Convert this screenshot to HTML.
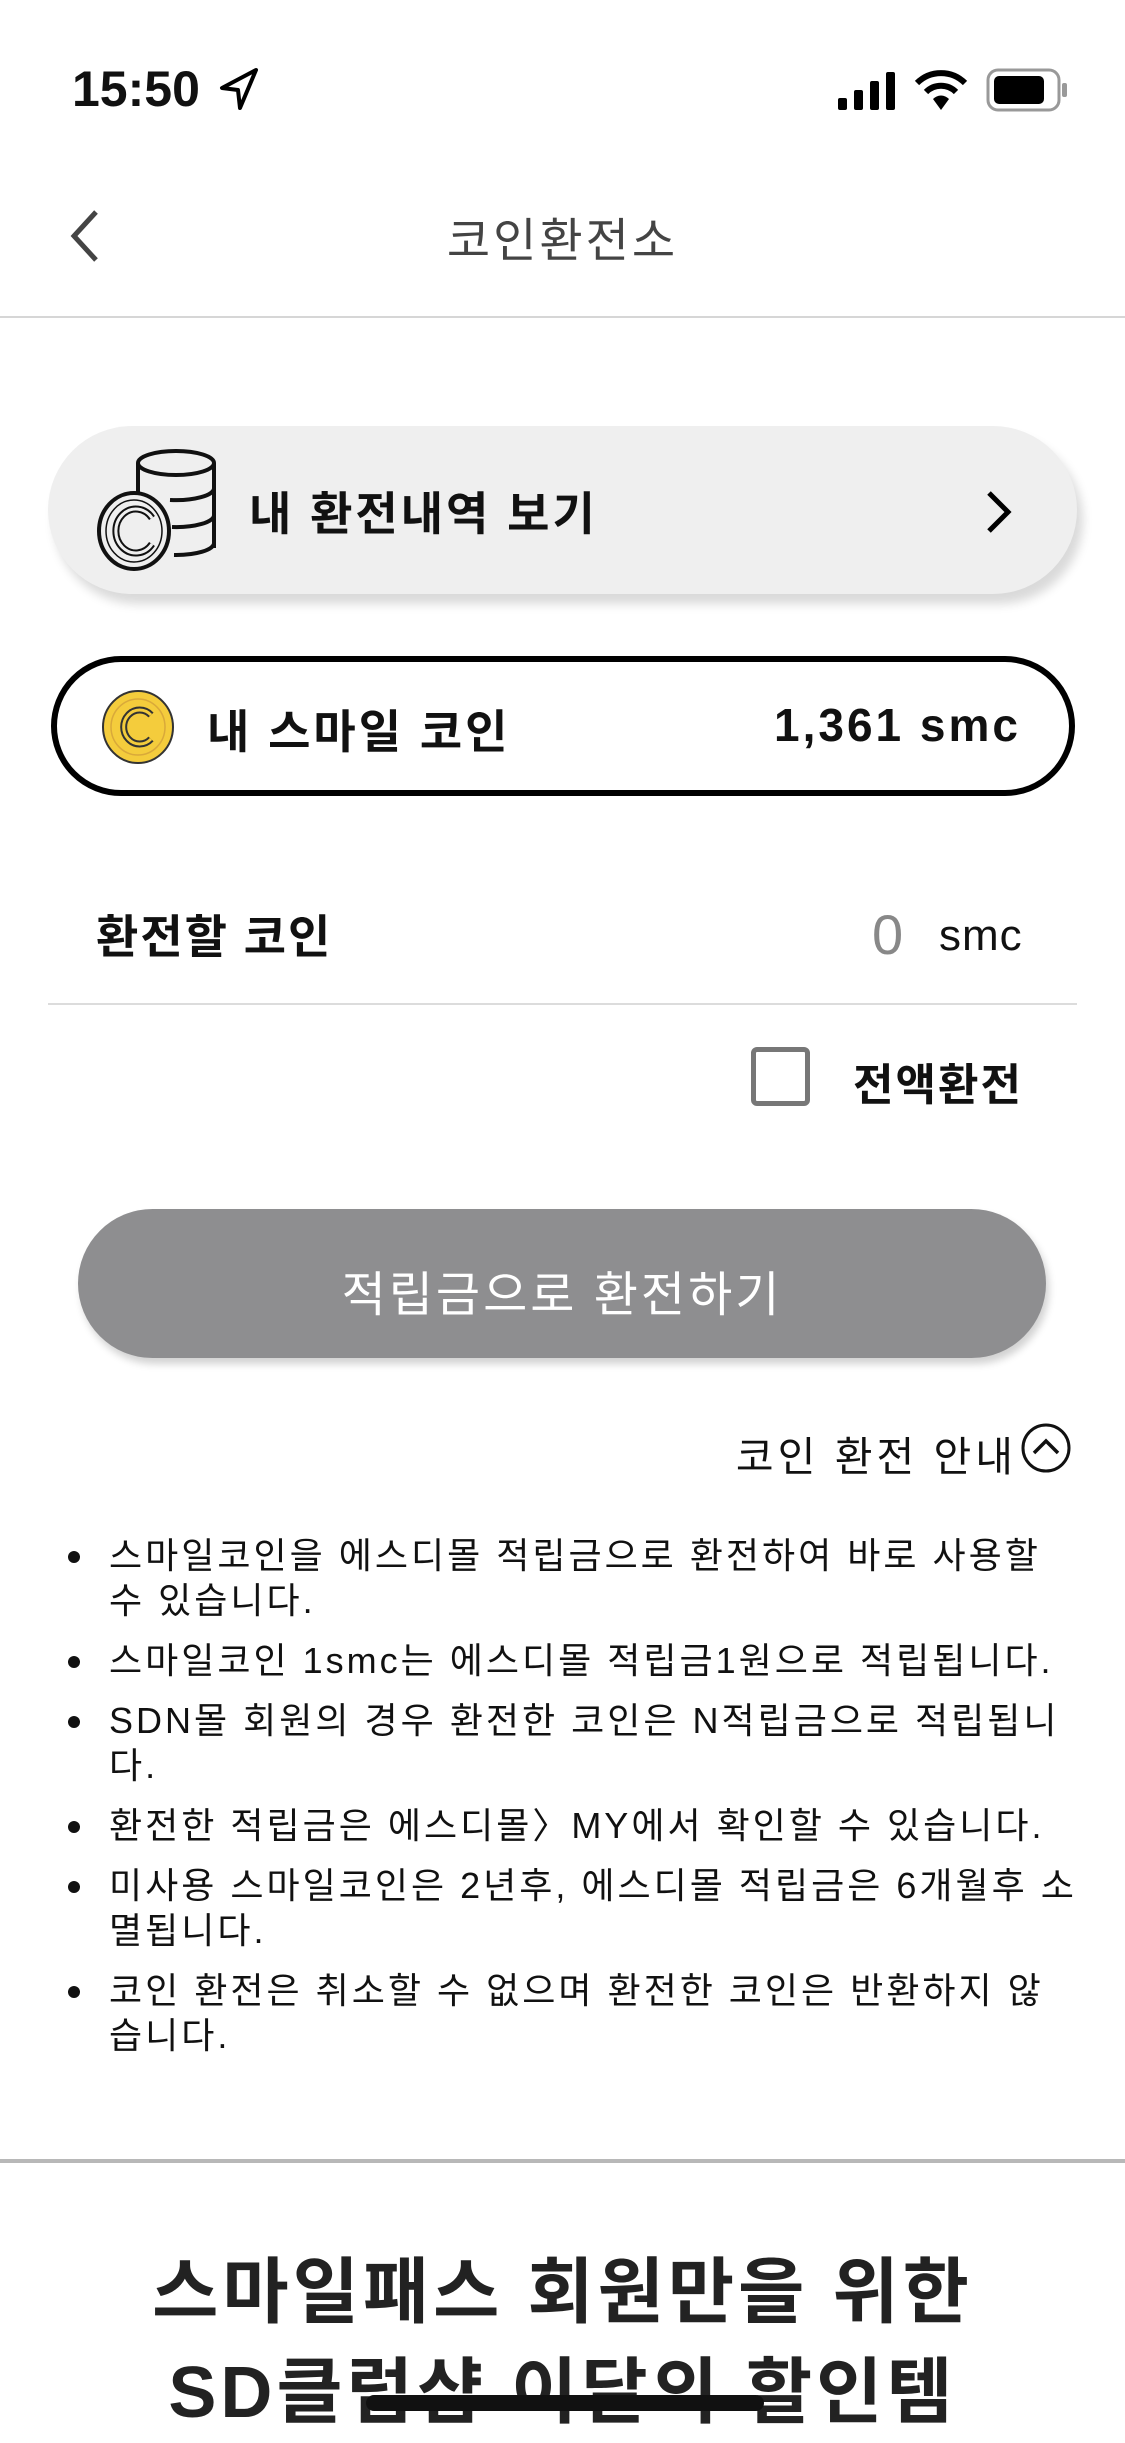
<!DOCTYPE html>
<html><head><meta charset="utf-8"><style>
*{margin:0;padding:0;box-sizing:border-box}
body{width:1125px;height:2436px;background:#fff;position:relative;overflow:hidden;font-family:"Liberation Sans","Noto Sans CJK KR",sans-serif;color:#111}
.a{position:absolute;white-space:nowrap}
ul{position:absolute;left:68px;top:1533px;width:1010px;list-style:none}
li{position:relative;padding-left:41px;font-size:36px;letter-spacing:3px;line-height:45px;margin-bottom:15px;color:#111}
li:before{content:"";position:absolute;left:0;top:18px;width:12px;height:12px;border-radius:50%;background:#111}
</style></head><body>
<div class="a" style="left:72px;top:60px;font-size:50px;font-weight:bold;letter-spacing:0px">15:50</div>
<svg class="a" style="left:218px;top:66px" width="42" height="46" viewBox="0 0 42 46"><path d="M38 4 L4 22 L20 24 L22 42 Z" fill="none" stroke="#000" stroke-width="4" stroke-linejoin="round"/></svg>
<svg class="a" style="left:838px;top:70px" width="62" height="40"><rect x="0" y="28" width="9" height="12" rx="2"/><rect x="16" y="20" width="9" height="20" rx="2"/><rect x="32" y="11" width="9" height="29" rx="2"/><rect x="48" y="2" width="9" height="38" rx="2"/></svg>
<svg class="a" style="left:914px;top:68px" width="54" height="44" viewBox="0 0 54 44"><path d="M3 15 A34 34 0 0 1 51 15" fill="none" stroke="#000" stroke-width="6"/><path d="M12 24 A21 21 0 0 1 42 24" fill="none" stroke="#000" stroke-width="6"/><path d="M19 31 L27 42 L35 31 A11 11 0 0 0 19 31Z"/></svg>
<svg class="a" style="left:986px;top:68px" width="84" height="44"><rect x="2" y="2" width="71" height="40" rx="10" fill="none" stroke="#999" stroke-width="3"/><rect x="8" y="8" width="50" height="28" rx="5"/><rect x="76" y="15" width="5" height="14" rx="2" fill="#999"/></svg>
<svg class="a" style="left:66px;top:208px" width="36" height="56"><path d="M30 4 L8 28 L30 52" fill="none" stroke="#444" stroke-width="5"/></svg>
<div class="a" style="left:0;width:1125px;text-align:center;top:202px;font-size:47px;letter-spacing:3px;color:#444">코인환전소</div>
<div class="a" style="left:0;top:316px;width:1125px;height:2px;background:#d6d6d6"></div>

<div class="a" style="left:48px;top:426px;width:1029px;height:168px;border-radius:84px;background:#efefef;box-shadow:6px 10px 10px rgba(0,0,0,0.15)"></div>
<svg class="a" style="left:94px;top:448px" width="126" height="126" viewBox="0 0 126 126"><g fill="none" stroke="#111" stroke-width="4"><ellipse cx="82" cy="15" rx="38" ry="12" fill="#efefef"/><path d="M44 15 V48 M120 15 V100 M120 40 A38 12 0 0 1 76 52 M120 67 A38 12 0 0 1 78 79 M120 95 A38 12 0 0 1 80 107"/><ellipse cx="40" cy="83" rx="35" ry="38" fill="#efefef"/><ellipse cx="40" cy="83" rx="28" ry="31" stroke-width="1.5"/><path d="M58 70 A20 22 0 1 0 58 96" stroke-width="7"/><path d="M58 70 A20 22 0 1 0 58 96" stroke="#efefef" stroke-width="3"/></g></svg>
<div class="a" style="left:249px;top:478px;font-size:46px;font-weight:bold;letter-spacing:3px">내 환전내역 보기</div>
<svg class="a" style="left:984px;top:490px" width="30" height="44"><path d="M5 3 L24 22 L5 41" fill="none" stroke="#000" stroke-width="5"/></svg>

<div class="a" style="left:51px;top:656px;width:1024px;height:140px;border-radius:70px;border:6px solid #000"></div>
<svg class="a" style="left:101px;top:689px" width="74" height="76"><ellipse cx="37" cy="38" rx="35" ry="36" fill="#f4cc3c" stroke="#333" stroke-width="2"/><ellipse cx="37" cy="38" rx="27" ry="28" fill="none" stroke="#d9a93a" stroke-width="1.5"/><path d="M50 26 A16 17 0 1 0 50 50" fill="none" stroke="#333" stroke-width="7"/><path d="M50 26 A16 17 0 1 0 50 50" fill="none" stroke="#f4cc3c" stroke-width="3"/></svg>
<div class="a" style="left:207px;top:696px;font-size:46px;font-weight:bold;letter-spacing:3px">내 스마일 코인</div>
<div class="a" style="right:104px;top:698px;font-size:46px;font-weight:bold;letter-spacing:3px">1,361 smc</div>

<div class="a" style="left:96px;top:901px;font-size:46px;font-weight:bold;letter-spacing:2px">환전할 코인</div>
<div class="a" style="left:872px;top:902px;font-size:56px;color:#888">0</div>
<div class="a" style="left:939px;top:911px;font-size:44px;letter-spacing:1px">smc</div>
<div class="a" style="left:48px;top:1003px;width:1029px;height:2px;background:#dcdcdc"></div>
<div class="a" style="left:751px;top:1047px;width:59px;height:59px;border:5px solid #777;border-radius:6px"></div>
<div class="a" style="left:853px;top:1049px;font-size:44px;font-weight:bold;letter-spacing:2px">전액환전</div>

<div class="a" style="left:78px;top:1209px;width:968px;height:149px;border-radius:75px;background:#8e8e90;box-shadow:3px 6px 8px rgba(0,0,0,0.18)"></div>
<div class="a" style="left:78px;top:1255px;width:968px;text-align:center;font-size:48px;color:#fff;letter-spacing:3px">적립금으로 환전하기</div>

<div class="a" style="right:108px;top:1423px;font-size:41px;color:#111;letter-spacing:4px">코인 환전 안내</div>
<svg class="a" style="left:1020px;top:1422px" width="52" height="52"><circle cx="26" cy="26" r="23" fill="none" stroke="#111" stroke-width="3"/><path d="M14 31 L26 19 L38 31" fill="none" stroke="#111" stroke-width="3.5"/></svg>

<ul>
<li>스마일코인을 에스디몰 적립금으로 환전하여 바로 사용할 수 있습니다.</li>
<li>스마일코인 1smc는 에스디몰 적립금1원으로 적립됩니다.</li>
<li>SDN몰 회원의 경우 환전한 코인은 N적립금으로 적립됩니다.</li>
<li>환전한 적립금은 에스디몰〉MY에서 확인할 수 있습니다.</li>
<li>미사용 스마일코인은 2년후, 에스디몰 적립금은 6개월후 소멸됩니다.</li>
<li>코인 환전은 취소할 수 없으며 환전한 코인은 반환하지 않습니다.</li>
</ul>

<div class="a" style="left:0;top:2159px;width:1125px;height:4px;background:#b8b8b8"></div>
<div class="a" style="left:0;width:1125px;text-align:center;top:2243px;font-size:72px;font-weight:bold;color:#222;line-height:100px;letter-spacing:4px">스마일패스 회원만을 위한<br>SD클럽샵 이달의 할인템</div>
<div class="a" style="left:366px;top:2395px;width:398px;height:16px;border-radius:8px;background:#111"></div>
</body></html>
